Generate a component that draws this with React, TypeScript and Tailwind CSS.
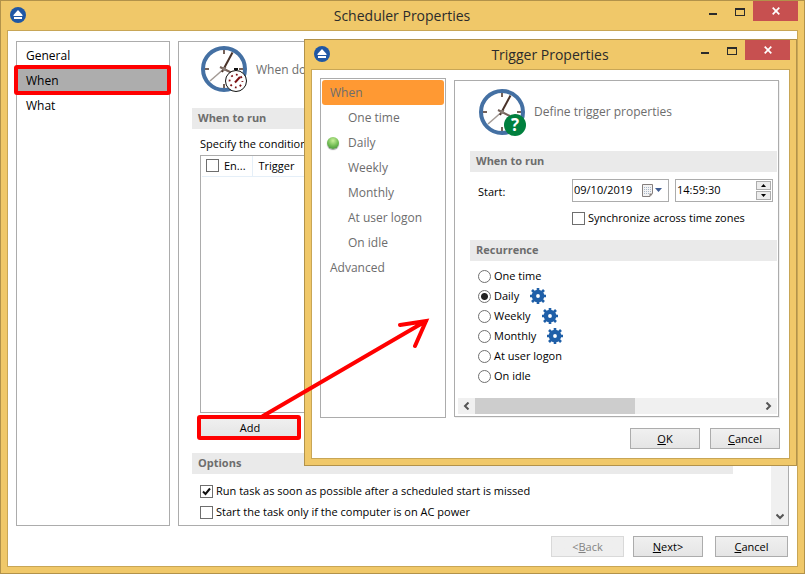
import { useState } from "react";
import type { ReactNode } from "react";

const triggerItems = ["One time", "Daily", "Weekly", "Monthly", "At user logon", "On idle"];
const withSettings = ["Daily", "Weekly", "Monthly"];

function AppLogo() {
  return (
    <svg width="16" height="16" viewBox="0 0 16 16" aria-hidden="true">
      <circle cx="8" cy="8" r="8" fill="#1f57a4" />
      <path d="M8 3 L12.5 8 V9 H3.5 V8 Z" fill="#fff" />
      <rect x="4" y="10" width="8" height="2" fill="#fff" />
    </svg>
  );
}

function Clock({ children }: { children: ReactNode }) {
  return (
    <svg width="47" height="47" viewBox="0 0 47 47" className="shrink-0" aria-hidden="true">
      <circle cx="23" cy="23" r="21" fill="#fff" stroke="#4470a3" strokeWidth="4" />
      <g stroke="#75625a" strokeWidth="2">
        <path d="M23 4 V8 M23 38 V42 M4 23 H8 M38 23 H42" />
      </g>
      <path d="M25 21 L9 35" stroke="#a39a95" strokeWidth="1.5" />
      <path d="M19 21 L31 27" stroke="#75625a" strokeWidth="2" />
      <path d="M21 26 L31.5 6.5" stroke="#493229" strokeWidth="2" />
      <circle cx="23" cy="23" r="2" fill="#8b7c75" />
      {children}
    </svg>
  );
}

function Gear() {
  return (
    <svg width="16" height="16" viewBox="0 0 16 16" aria-hidden="true">
      <g stroke="#1f5fa8" strokeWidth="2.6">
        <path d="M8 0 V3 M8 13 V16 M0 8 H3 M13 8 H16 M2 2 L4 4 M12 12 L14 14 M14 2 L12 4 M4 12 L2 14" />
      </g>
      <circle cx="8" cy="8" r="4.1" fill="#fff" stroke="#1f5fa8" strokeWidth="4.4" />
    </svg>
  );
}

function TitleBar({ title }: { title: string }) {
  return (
    <header className="grid h-[29px] grid-cols-[1fr_auto_1fr] items-start pl-[3px]">
      <span className="pt-[6px]">
        <AppLogo />
      </span>
      <h1 className="pt-[5px] pr-1 text-sm leading-5 text-[#2b2b2b]">{title}</h1>
      <div className="flex h-5 justify-end">
        <button type="button" aria-label="Minimize" className="flex w-7 items-center justify-center pt-[6px]">
          <span className="h-[2px] w-2 bg-[#2b2b2b]" />
        </button>
        <button type="button" aria-label="Maximize" className="flex w-[26px] items-center justify-center pt-[2px]">
          <span className="h-2 w-[10px] border border-t-2 border-[#2b2b2b]" />
        </button>
        <button type="button" aria-label="Close" className="flex w-[45px] items-center justify-center bg-[#c75050]">
          <svg width="8" height="8" viewBox="0 0 8 8" aria-hidden="true">
            <path d="M0.7 0.7 L7.3 7.3 M7.3 0.7 L0.7 7.3" stroke="#fff" strokeWidth="1.7" />
          </svg>
        </button>
      </div>
    </header>
  );
}

function SectionHeader({ children }: { children: ReactNode }) {
  return <h2 className="h-[21px] bg-[#eaeaea] px-[6px] text-[11px] leading-5 font-bold text-[#6d6d6d]">{children}</h2>;
}

function CheckBox({ checked = false, label }: { checked?: boolean; label?: string }) {
  return (
    <span className="relative block size-[13px] shrink-0">
      <input
        type="checkbox"
        defaultChecked={checked}
        aria-label={label}
        className="peer block size-[13px] appearance-none border border-[#6e6e6e] bg-white"
      />
      <svg
        viewBox="0 0 13 13"
        className="pointer-events-none absolute inset-0 hidden size-[13px] peer-checked:block"
        aria-hidden="true"
      >
        <path d="M3 6.5 L5.5 9 L10 3.5" fill="none" stroke="#111" strokeWidth="2" />
      </svg>
    </span>
  );
}

function PushButton({ className, disabled, children }: { className: string; disabled?: boolean; children: ReactNode }) {
  return (
    <button
      type="button"
      disabled={disabled}
      className={`h-[21px] border border-[#acacac] bg-linear-to-b from-[#f0f0f0] to-[#e5e5e5] text-[11px] leading-none text-black disabled:border-[#d9d9d9] disabled:from-[#efefef] disabled:to-[#efefef] disabled:text-[#838383] ${className}`}
    >
      {children}
    </button>
  );
}

function TriggerDialog() {
  const [recurrence, setRecurrence] = useState("Daily");

  return (
    <section
      aria-label="Trigger Properties"
      className="absolute top-[38px] right-[7px] left-[303px] border border-[#b2924a] bg-[#f0c869] px-[6px] pb-[6px]"
    >
      <TitleBar title="Trigger Properties" />
      <div className="border border-[#c8a656] bg-white pt-2 pr-[9px] pb-[9px] pl-2">
        <div className="flex gap-2">
          <nav className="w-[126px] shrink-0 border border-[#acacac] p-px text-[12px] leading-[25px] text-[#6d6d6d]">
            <a href="#when" className="block rounded-[3px] bg-[#ff9933] pl-2">
              When
            </a>
            {triggerItems.map((item) => (
              <a key={item} href="#trigger" className="flex items-center pl-[5px]">
                <span className="w-[21px]">
                  {item === recurrence && (
                    <span className="block size-3 rounded-full bg-[radial-gradient(circle_at_50%_30%,#c9f09a,#6db950_55%,#3d8038)] shadow-[0_1px_1px_#999]" />
                  )}
                </span>
                {item}
              </a>
            ))}
            <a href="#advanced" className="block pl-2">
              Advanced
            </a>
          </nav>

          <div className="mt-[2px] mb-px mr-px flex-1 border border-[#acacac] shadow-[1px_1px_0_#f0f0f0]">
            <div className="flex items-center gap-2 pt-2 pl-6">
              <Clock>
                <circle cx="36" cy="36" r="11" fill="#00803e" />
                <text x="36" y="42" textAnchor="middle" fill="#fff" fontSize="17" fontWeight="700">
                  ?
                </text>
              </Clock>
              <p className="pb-[2px] text-[12px] text-[#6d6d6d]">Define trigger properties</p>
            </div>

            <div className="mt-[15px] mr-px ml-[15px]">
              <SectionHeader>When to run</SectionHeader>
              <div className="flex pt-[7px] pr-1 pl-2">
                <label htmlFor="start-date" className="w-[94px] pt-[5px]">
                  Start:
                </label>
                <div className="flex h-[23px] w-[97px] items-center border border-[#acacac] pb-px">
                  <input id="start-date" defaultValue="09/10/2019" className="w-[69px] pl-px outline-none" />
                  <button type="button" aria-label="Open calendar" className="flex items-center gap-[2px]">
                    <svg width="11" height="13" viewBox="0 0 11 13" aria-hidden="true">
                      <path d="M0.5 0.5 H10.5 V9.5 L8 12.5 H0.5 Z" fill="#f3f3f3" stroke="#857f7d" />
                      <path d="M2 3.5 H9 M2 5.5 H9 M2 7.5 H9 M2 9.5 H7" stroke="#a9b7c9" strokeDasharray="1 1" />
                      <path d="M7.5 12.5 V9.5 H10.5 Z" fill="#857f7d" />
                    </svg>
                    <svg width="7" height="4" viewBox="0 0 7 4" aria-hidden="true">
                      <path d="M0 0 H7 L3.5 4 Z" fill="#3f5c91" />
                    </svg>
                  </button>
                </div>
                <div className="ml-[6px] flex h-[23px] flex-1 items-center border border-[#acacac] pr-px pb-px">
                  <input aria-label="Start time" defaultValue="14:59:30" className="w-0 flex-1 pl-px outline-none" />
                  <span className="flex flex-col gap-px">
                    <button type="button" aria-label="Later" className="flex h-[9px] w-[15px] items-center justify-center border border-[#acacac] bg-[#ececec]">
                      <svg width="5" height="3" viewBox="0 0 5 3" aria-hidden="true">
                        <path d="M0 3 H5 L2.5 0 Z" />
                      </svg>
                    </button>
                    <button type="button" aria-label="Earlier" className="flex h-[9px] w-[15px] items-center justify-center border border-[#acacac] bg-[#ececec]">
                      <svg width="5" height="3" viewBox="0 0 5 3" aria-hidden="true">
                        <path d="M0 0 H5 L2.5 3 Z" />
                      </svg>
                    </button>
                  </span>
                </div>
              </div>
              <label className="mt-2 mb-[14px] ml-[102px] flex h-4 items-center gap-[3px]">
                <CheckBox />
                Synchronize across time zones
              </label>

              <SectionHeader>Recurrence</SectionHeader>
              <div className="pt-[5px] pl-2">
                {triggerItems.map((item) => (
                  <div key={item} className="flex h-5 items-center gap-[11px]">
                    <label className="flex items-center gap-[3px]">
                      <input
                        type="radio"
                        name="recurrence"
                        checked={recurrence === item}
                        onChange={() => setRecurrence(item)}
                        className="size-[13px] appearance-none rounded-full border border-[#707070] bg-white checked:bg-[radial-gradient(circle,#222_3px,#fff_4px)]"
                      />
                      {item}
                    </label>
                    {withSettings.includes(item) && (
                      <button type="button" aria-label={`${item} settings`}>
                        <Gear />
                      </button>
                    )}
                  </div>
                ))}
              </div>
            </div>

            <div className="mt-3 mr-px mb-[2px] ml-[3px] flex h-4 items-center bg-[#f0f0f0]">
              <span className="flex w-[17px] justify-center">
                <svg width="7" height="8" viewBox="0 0 7 8" aria-hidden="true">
                  <path d="M5.5 0.5 L2 4 L5.5 7.5" fill="none" stroke="#555" strokeWidth="2" />
                </svg>
              </span>
              <span className="h-full w-[160px] bg-[#cdcdcd]" />
              <span className="ml-auto flex w-[17px] justify-center">
                <svg width="7" height="8" viewBox="0 0 7 8" aria-hidden="true">
                  <path d="M1.5 0.5 L5 4 L1.5 7.5" fill="none" stroke="#555" strokeWidth="2" />
                </svg>
              </span>
            </div>
          </div>
        </div>

        <div className="mt-[10px] flex justify-end gap-[10px]">
          <PushButton className="w-[70px]">
            <u>O</u>K
          </PushButton>
          <PushButton className="w-[70px]">
            <u>C</u>ancel
          </PushButton>
        </div>
      </div>
    </section>
  );
}

export default function App() {
  return (
    <div className="relative flex min-h-screen flex-col border border-[#b2924a] bg-[#f0c869] px-[6px] pb-[6px] font-['Open_Sans',sans-serif] text-[11px] leading-4 text-black">
      <TitleBar title="Scheduler Properties" />
      <main className="flex flex-1 flex-col border border-[#c8a656] bg-white px-2 pt-[10px] pb-[9px]">
        <div className="flex flex-1 gap-2">
          <nav className="w-[154px] shrink-0 border border-[#acacac] p-px text-[12px] leading-[25px]">
            <a href="#general" className="block pl-2">
              General
            </a>
            <a href="#when" className="relative block bg-[#adadad] pl-2">
              When
              <span className="absolute -top-[3px] -right-[3px] -bottom-[2px] -left-1 rounded-[3px] border-4 border-[#ff0000]" />
            </a>
            <a href="#what" className="block pl-2">
              What
            </a>
          </nav>

          <div className="flex flex-1 border border-[#acacac]">
            <div className="flex-1 pt-1 pr-[38px] pl-[13px]">
              <div className="flex items-center gap-2 pl-[9px]">
                <Clock>
                  <path d="M33 22 H37 V24 H36 V26 H34 V24 H33 Z" fill="#111" />
                  <circle cx="35" cy="35" r="10.5" fill="#fff" stroke="#111" />
                  <circle cx="35" cy="35" r="6.4" fill="none" stroke="#7b1113" strokeWidth="1.8" strokeDasharray="1.8 3.227" strokeDashoffset="0.9" />
                  <path d="M34 36.5 L39 31" stroke="#7b1113" strokeWidth="2" />
                </Clock>
                <p className="text-[12px] text-[#6d6d6d]">When do</p>
              </div>

              <div className="mt-[15px]">
                <SectionHeader>When to run</SectionHeader>
              </div>
              <p className="pt-[7px] pb-[3px] pl-2">Specify the conditions</p>
              <div className="ml-2 h-[258px] border border-[#acacac] px-px">
                <table className="w-full text-left">
                  <thead>
                    <tr className="h-[20px] border-b border-[#e5eff8]">
                      <th className="w-[50px] border-r border-[#e5eff8] p-0 pl-1 font-normal">
                        <span className="flex items-center gap-[5px]">
                          <CheckBox label="Enable all triggers" />
                          En...
                        </span>
                      </th>
                      <th className="p-0 pl-[6px] font-normal">Trigger</th>
                    </tr>
                  </thead>
                </table>
              </div>
              <div className="relative mt-1 ml-2 w-[100px]">
                <PushButton className="block w-full">Add</PushButton>
                <span className="pointer-events-none absolute -top-[2px] -right-px -bottom-[2px] -left-[3px] rounded-[3px] border-4 border-[#ff0000]" />
              </div>

              <div className="mt-[15px]">
                <SectionHeader>Options</SectionHeader>
              </div>
              <div className="flex flex-col gap-[5px] pt-[9px] pl-2">
                <label className="flex h-4 items-center gap-[3px]">
                  <CheckBox checked />
                  Run task as soon as possible after a scheduled start is missed
                </label>
                <label className="flex h-4 items-center gap-[3px]">
                  <CheckBox />
                  Start the task only if the computer is on AC power
                </label>
              </div>
            </div>
            <div className="flex w-[17px] items-end justify-center bg-[#f0f0f0] pb-[5px]">
              <svg width="8" height="7" viewBox="0 0 8 7" aria-hidden="true">
                <path d="M0.5 1.5 L4 5 L7.5 1.5" fill="none" stroke="#555" strokeWidth="2" />
              </svg>
            </div>
          </div>
        </div>

        <div className="mt-[10px] flex justify-end pr-px">
          <PushButton disabled className="mr-[9px] w-[73px]">
            &lt;<u>B</u>ack
          </PushButton>
          <PushButton className="mr-3 w-[70px]">
            <u>N</u>ext&gt;
          </PushButton>
          <PushButton className="w-[73px]">
            <u>C</u>ancel
          </PushButton>
        </div>
      </main>

      <TriggerDialog />

      {/* arrow from the Add button to the dialog */}
      <svg
        width="170"
        height="100"
        viewBox="0 0 170 100"
        className="pointer-events-none absolute top-[316px] left-[260px]"
        aria-hidden="true"
      >
        <path d="M2 99 L165 4 M139 8 L165 4 L154 29" fill="none" stroke="#ff0000" strokeWidth="4" strokeLinecap="round" />
      </svg>
    </div>
  );
}
